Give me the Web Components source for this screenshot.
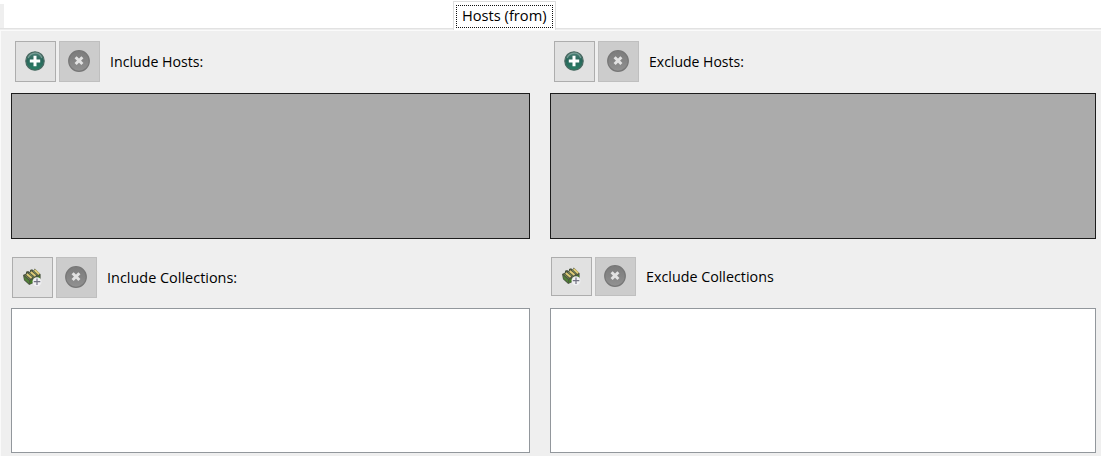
<!DOCTYPE html>
<html lang="en"><head><meta charset="utf-8"><title>Hosts (from)</title>
<style>html,body{margin:0;height:100%;overflow:hidden;background:#efefef;font:15px "Open Sans","Noto Sans",sans-serif;color:#000}</style></head>
<body><hosts-page></hosts-page>
<script>
const define=(name,html,setup)=>customElements.define(name,class extends HTMLElement{
  connectedCallback(){
    if(this.shadowRoot)return;
    const t=document.createElement('template');t.innerHTML=html;
    this.attachShadow({mode:'open'}).append(t.content.cloneNode(true));
    if(setup)setup(this,this.shadowRoot);
  }
});
const icons={
add:`<svg width="22" height="22" viewBox="0 0 22 22"><defs><linearGradient id="g" x2="0" y2="1"><stop stop-color="#4e8278"/><stop offset=".45" stop-color="#28665a"/><stop offset="1" stop-color="#2c7f66"/></linearGradient></defs><circle cx="11" cy="11" r="9.2" fill="url(#g)" stroke="#4a6861" stroke-width="1.2"/><path d="M4.2 8Q6 3.5 11 3.2T17.8 8" fill="none" stroke="#8eada6" stroke-width="1.3" opacity=".7"/><path d="M11 5.8v10.4M5.8 11h10.4" stroke="#fff" stroke-width="3"/></svg>`,
remove:`<svg width="24" height="24" viewBox="0 0 24 24"><defs><linearGradient id="g" x2="0" y2="1"><stop stop-color="#7c7c7c"/><stop offset=".5" stop-color="#858585"/><stop offset="1" stop-color="#929292"/></linearGradient></defs><circle cx="12" cy="12" r="10.3" fill="url(#g)" stroke="#777" stroke-width="1.2"/><path d="m8.6 8.2 6.8 6.8m0-6.8L8.6 15" stroke="#e2e2e2" stroke-width="3"/></svg>`,
collection:`<svg width="20" height="20" viewBox="0 0 20 20"><path d="M1 8 4 6.5V4.7L6 4l2 1V3l2-.8 1.8 1.2 1-2 5.8 5.8v5.2L7.2 18 2 13.2Z" fill="#4c5541"/><path d="m2.2 9.2 5 4.5v3L2.6 12.8Z" fill="#518139"/><path d="m8 13.8 10-5.1v3.4L8 17Z" fill="#467a2a"/><path d="m4.8 7 4.8 4m-.9-6 4.8 4m-.9-6.1 4.6 4.3" stroke="#e0cc78" stroke-width="2"/><path d="m3.3 8.4 4.5 4M7 6.2l4.8 4.1M11 4l4.7 4.2" stroke="#83935c" stroke-width=".8"/><circle cx="15" cy="14.7" r="4.5" fill="#f0f0f2"/><path d="M15 11.5V18M11.8 14.7h6.5" stroke="#737384" stroke-width="1.2"/></svg>`
};
define('icon-button',`<style>:host{display:block;width:41px;height:100%;flex:none}button{box-sizing:border-box;width:100%;height:100%;padding:0;border:1px solid #adadad;background:#e1e1e1;display:flex;align-items:center;justify-content:center}button:disabled{background:#ccc;border-color:#bfbfbf}svg{display:block}:host([icon=add]) svg{margin:-1px 1px 0 0}:host([icon=remove]) svg{margin:-2px 2px 0 0}:host([icon=collection]) svg{margin:-1px 1px 0 0}</style><button type="button"></button>`,(h,r)=>{
  const b=r.querySelector('button');b.innerHTML=icons[h.getAttribute('icon')];b.disabled=h.getAttribute('icon')==='remove';b.setAttribute('aria-label',h.getAttribute('icon'));
});
define('field-label',`<style>:host{display:block;white-space:nowrap;line-height:20px;transform-origin:0 50%;transform:scaleX(var(--fit,.94))}</style><slot></slot>`);
define('list-panel',`<style>:host{display:block;box-sizing:border-box;background:#fff;border:1px solid #92979c}:host([filled]){background:#ababab;border-color:#1c1c1c}</style><slot></slot>`);
define('tool-row',`<style>:host{display:flex;gap:3px}::slotted([slot=label]){margin:var(--label-top,10px) 0 0 7px}</style><slot></slot><slot name="label"></slot>`);
define('tab-strip',`<style>:host{display:flex;height:30px;background:linear-gradient(#fff 0 28px,#e2e2e2 28px 29px,#eee 29px);padding-left:453px;box-sizing:border-box}.edge{flex:none;width:4px;height:24px;background:#efefef;margin:4px 449px 0 -453px}button{box-sizing:border-box;flex:none;width:103px;height:29px;margin:1px 0 0;background:#fff;border:1px solid #dedede;border-bottom:0;padding:2px;font:inherit;color:#000}.focus{display:flex;box-sizing:border-box;width:97px;height:23px;border:1px dotted #111;padding-left:5px;white-space:nowrap}</style><div class="edge"></div><button type="button" role="tab" aria-selected="true"><span class="focus"><slot></slot></span></button>`);
define('hosts-page',`<style>
:host{display:flex;flex-direction:column;width:1101px;height:456px;background:#efefef}
main{box-sizing:border-box;height:426px;border-top:1px solid #fafafa;border-left:1px solid #fafafa;padding-left:10px;display:grid;grid-template-columns:519px 546px;column-gap:20px;grid-template-rows:62px 146px 69px 145px}
.hosts{height:41px;margin:10px 0 0 4px}.collections{height:41px;margin:18px 0 0 1px}
.short{height:39px;--label-top:9px}
.tabtext{margin-top:-1px;--fit:.977}
</style><tab-strip><field-label class="tabtext">Hosts (from)</field-label></tab-strip><main>
<tool-row class="hosts"><icon-button icon="add"></icon-button><icon-button icon="remove"></icon-button><field-label slot="label" style="--fit:.945">Include Hosts:</field-label></tool-row>
<tool-row class="hosts"><icon-button icon="add"></icon-button><icon-button icon="remove"></icon-button><field-label slot="label" style="--fit:.935">Exclude Hosts:</field-label></tool-row>
<list-panel filled></list-panel><list-panel filled></list-panel>
<tool-row class="collections"><icon-button icon="collection"></icon-button><icon-button icon="remove"></icon-button><field-label slot="label" style="--fit:.963">Include Collections:</field-label></tool-row>
<tool-row class="collections short"><icon-button icon="collection"></icon-button><icon-button icon="remove"></icon-button><field-label slot="label" style="--fit:.953">Exclude Collections</field-label></tool-row>
<list-panel></list-panel><list-panel></list-panel></main>`);
</script></body></html>
